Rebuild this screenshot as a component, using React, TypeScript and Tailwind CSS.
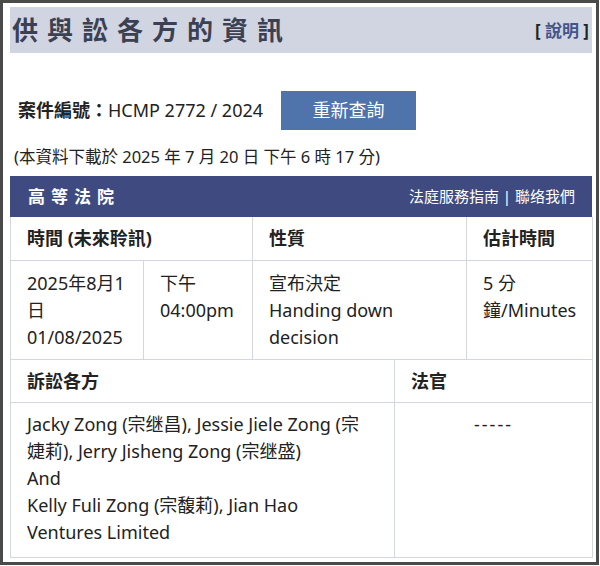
export default function App() {
  const font = "font-['Noto_Sans','Noto_Sans_CJK_TC',sans-serif]";
  const cell = "border-[#d3d6da] px-[16px]";

  return (
    <div className={`w-[599px] h-[565px] bg-white border-[3px] border-[#4a4a4a] pl-[7px] pr-[4px] pt-[4px] text-[#222] ${font}`}>
      {/* title */}
      <div className="flex items-center justify-between h-[46px] bg-[#d1d5e1] pl-[2px] pr-[3px]">
        <h1 className="text-[26px] font-bold tracking-[9px] text-[#3b4152] leading-none">供與訟各方的資訊</h1>
        <div className="text-[17px] font-bold leading-none">
          <span>[ </span>
          <span className="text-[#44558a]">說明</span>
          <span> ]</span>
        </div>
      </div>

      {/* case number */}
      <div className="flex items-center mt-[38px] pl-[8px]">
        <span className="text-[18px] font-bold">案件編號：</span>
        <span className="text-[18px]">HCMP 2772 / 2024</span>
        <button className="ml-[18px] w-[135px] h-[39px] bg-[#4f73ab] text-white text-[18px]">重新查詢</button>
      </div>

      <p className="mt-[17px] pl-[4px] text-[16.5px] leading-[20px]">(本資料下載於 2025 年 7 月 20 日 下午 6 時 17 分)</p>

      {/* court table */}
      <div className="mt-[9px] w-[582px]">
        <div className="flex items-center justify-between h-[41px] bg-[#3f4b80] text-white pl-[18px] pr-[17px]">
          <span className="text-[17px] font-bold tracking-[6px]">高等法院</span>
          <span className="text-[15px]">法庭服務指南 | 聯络我們</span>
        </div>

        <div className="grid grid-cols-[133px_109px_214px_126px] border-l border-[#d3d6da] text-[18px]">
          <div className={`col-span-2 h-[44px] flex items-center font-bold border-r border-b ${cell}`}>時間 (未來聆訊)</div>
          <div className={`h-[44px] flex items-center font-bold border-r border-b ${cell}`}>性質</div>
          <div className={`h-[44px] flex items-center font-bold border-r border-b ${cell}`}>估計時間</div>

          <div className={`h-[99px] pt-[9px] leading-[27px] border-r border-b pr-[8px] ${cell}`}>2025年8月1日<br />01/08/2025</div>
          <div className={`h-[99px] pt-[9px] leading-[27px] border-r border-b ${cell}`}>下午<br />04:00pm</div>
          <div className={`h-[99px] pt-[9px] leading-[27px] border-r border-b ${cell}`}>宣布決定<br />Handing down decision</div>
          <div className={`h-[99px] pt-[9px] leading-[27px] border-r border-b pr-[6px] ${cell}`}>5 分鐘/Minutes</div>
        </div>

        <div className="grid grid-cols-[384px_198px] border-l border-[#d3d6da] text-[18px]">
          <div className={`h-[43px] flex items-center font-bold border-r border-b ${cell}`}>訴訟各方</div>
          <div className={`h-[43px] flex items-center font-bold border-r border-b ${cell}`}>法官</div>

          <div className={`h-[155px] pt-[8px] leading-[27px] border-r border-b ${cell} pr-[22px]`}>
            Jacky Zong (宗继昌), Jessie Jiele Zong (宗婕莉), Jerry Jisheng Zong (宗继盛)
            <br />
            And
            <br />
            Kelly Fuli Zong (宗馥莉), Jian Hao Ventures Limited
          </div>
          <div className={`h-[155px] pt-[8px] leading-[27px] text-center tracking-[2px] border-r border-b ${cell}`}>-----</div>
        </div>
      </div>
    </div>
  );
}
